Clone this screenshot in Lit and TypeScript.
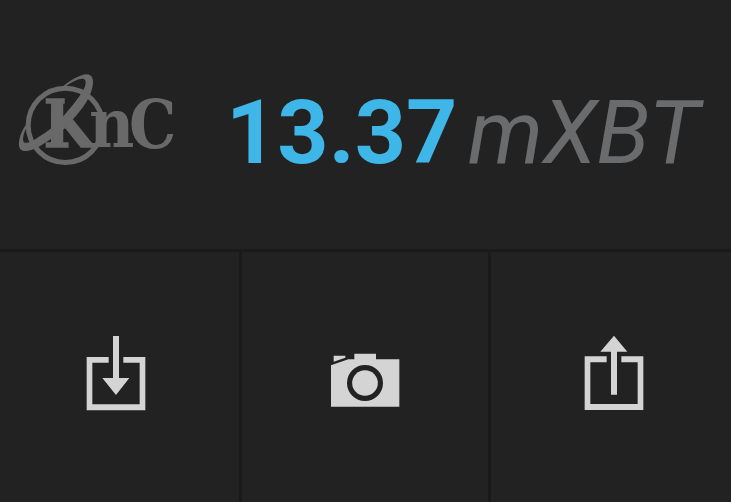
import { LitElement, html, css, svg } from "lit";
import { customElement, property } from "lit/decorators.js";

@customElement("knc-logo")
export class KncLogo extends LitElement {
  static styles = css`
    :host { display: block; flex: none; width: 175px; height: 120px; }
    svg { display: block; width: 100%; height: 100%; }
    .ink { fill: #696969; }
    .ring { fill: none; stroke: #696969; stroke-width: 15; }
    .letter { font-family: "DejaVu Serif", serif; font-weight: 700; font-size: 200px; fill: #696969; }
    .initial { font-size: 196px; stroke: #696969; stroke-width: 5px; }
  `;
  render() {
    return html`<svg viewBox="0 0 525 360" role="img" aria-label="KnC">
      <defs>
        <clipPath id="stem"><path d="M100 100H164V205L190 172L270 280H100Z" /></clipPath>
      </defs>
      <circle class="ring" cx="166" cy="196" r="111.5" />
      <path class="ink" fill-rule="evenodd"
        d="M160 78C188 56 213 44 229 43C246 43 252 57 248 78C243 108 223 142 183 184L165 205C132 232 105 250 85 261C60 275 37 277 30 266C22 253 29 219 48 194L49 204C40 222 37 238 41 245C47 253 62 246 78 236C105 220 127 205 152 178C188 137 218 101 225 79C230 61 225 55 215 56C201 58 184 66 167 79Z" />
      <g clip-path="url(#stem)">
        <text class="letter initial" x="101" y="261" textLength="149" lengthAdjust="spacingAndGlyphs">K</text>
      </g>
      <text class="letter" x="237" y="262" textLength="136" lengthAdjust="spacingAndGlyphs">n</text>
      <text class="letter" x="357" y="263" textLength="142" lengthAdjust="spacingAndGlyphs">C</text>
    </svg>`;
  }
}

const glyphs: Record<string, unknown> = {
  receive: svg`<path d="M32 93H98V110H49V235H191V110H142V93H208V253H32Z" /><path d="M111 30H129V156H160L120 207L79 156H111Z" />`,
  scan: svg`<path fill-rule="evenodd" d="M33 76L85 58H103V41H168V58H238V200H33ZM135 75A54 54 0 1 0 135 183A54 54 0 1 0 135 75Z" /><circle cx="135" cy="129" r="38.5" /><path d="M41 47H76V53L41 65Z" />`,
  send: svg`<path d="M32 91H98V109H49V234H191V109H142V91H208V252H32Z" /><path d="M120 29L160 77H129V206H111V77H79Z" />`,
};

@customElement("action-tile")
export class ActionTile extends LitElement {
  @property() kind = "receive";
  @property() label = "";
  static styles = css`
    :host { display: flex; }
    button { flex: 1; border: 0; padding: 0; margin: 0; background: #222; display: flex; justify-content: center; align-items: flex-start; }
    svg { display: block; fill: #d4d4d4; width: 80px; height: 95px; margin-top: 74px; }
    .scan { width: 90px; height: 80px; margin-top: 88px; }
    .receive { margin-right: 7px; }
    .send { margin-left: 6px; }
  `;
  render() {
    const box = this.kind === "scan" ? "0 0 270 240" : "0 0 240 285";
    return html`<button aria-label=${this.label}>
      <svg class=${this.kind} viewBox=${box}>${glyphs[this.kind]}</svg>
    </button>`;
  }
}

@customElement("app-root")
export class AppRoot extends LitElement {
  static styles = css`
    :host { display: flex; flex-direction: column; width: 731px; height: 502px; background: #1a1a1a; overflow: hidden; font-family: Roboto, sans-serif; }
    header { height: 249px; box-sizing: border-box; background: #222; display: flex; align-items: flex-start; padding: 60px 0 0 10px; }
    .balance { display: flex; margin: 20px 0 0 41px; font-size: 89.5px; line-height: 106px; white-space: nowrap; }
    .amount { font-weight: 700; color: #3eb7e8; width: 242px; }
    .unit { font-weight: 400; font-style: italic; color: #6a6b6d; transform: scaleX(0.984); transform-origin: left; }
    nav { flex: 1; margin-top: 3px; display: grid; grid-template-columns: 239px 246px 240px; column-gap: 3px; }
  `;
  render() {
    return html`
      <header>
        <knc-logo></knc-logo>
        <div class="balance"><span class="amount">13.37</span><span class="unit">mXBT</span></div>
      </header>
      <nav>
        <action-tile kind="receive" label="Receive"></action-tile>
        <action-tile kind="scan" label="Scan"></action-tile>
        <action-tile kind="send" label="Send"></action-tile>
      </nav>`;
  }
}
